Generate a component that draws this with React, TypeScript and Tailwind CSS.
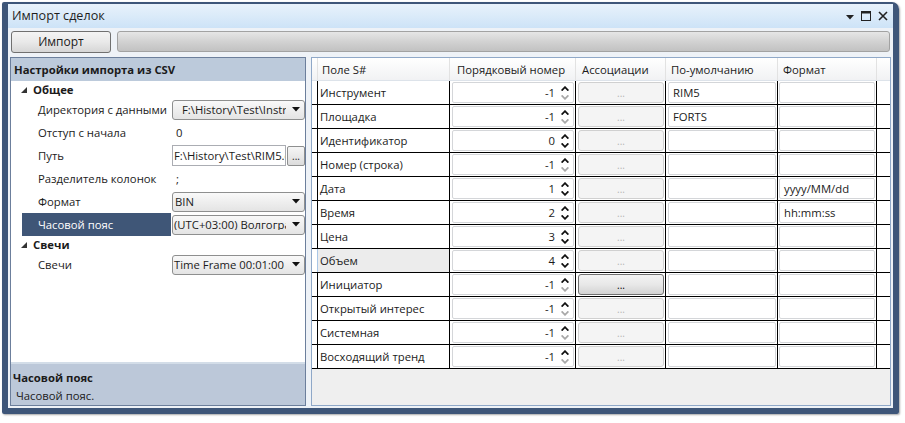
import React from "react";

type Row = {
  name: string;
  n: number;
  def?: string;
  fmt?: string;
  hover?: boolean;
  enabled?: boolean;
};

const rows: Row[] = [
  { name: "Инструмент", n: -1, def: "RIM5" },
  { name: "Площадка", n: -1, def: "FORTS" },
  { name: "Идентификатор", n: 0 },
  { name: "Номер (строка)", n: -1 },
  { name: "Дата", n: 1, fmt: "yyyy/MM/dd" },
  { name: "Время", n: 2, fmt: "hh:mm:ss" },
  { name: "Цена", n: 3 },
  { name: "Объем", n: 4, hover: true },
  { name: "Инициатор", n: -1, enabled: true },
  { name: "Открытый интерес", n: -1 },
  { name: "Системная", n: -1 },
  { name: "Восходящий тренд", n: -1 },
];

function DownTri() {
  return (
    <svg width="8" height="5" viewBox="0 0 8 5" className="shrink-0">
      <path d="M0 0 L8 0 L4 4.5 Z" fill="#111" />
    </svg>
  );
}

function Spinner({ downEnabled }: { downEnabled: boolean }) {
  return (
    <div className="flex flex-col items-center justify-center gap-[4px] w-[10px]">
      <svg width="8" height="5" viewBox="0 0 8 5">
        <path d="M0.6 4.6 L4 1.2 L7.4 4.6" stroke="#111" strokeWidth="1.8" fill="none" />
      </svg>
      <svg width="8" height="5" viewBox="0 0 8 5">
        <path
          d="M0.6 0.4 L4 3.8 L7.4 0.4"
          stroke={downEnabled ? "#111" : "#a8a8a8"}
          strokeWidth="1.8"
          fill="none"
        />
      </svg>
    </div>
  );
}

function Combo({ text, pl }: { text: string; pl: string }) {
  return (
    <div className="h-[20px] w-[133px] rounded-[3px] border border-[#8e8f8f] bg-gradient-to-b from-[#f9f9f9] to-[#e4e4e4] flex items-center pr-[4px]">
      <div className={`flex-1 overflow-hidden whitespace-nowrap mr-[6px] ${pl}`}>{text}</div>
      <DownTri />
    </div>
  );
}

function PropRow({
  label,
  selected,
  children,
}: {
  label: string;
  selected?: boolean;
  children: React.ReactNode;
}) {
  return (
    <div className="flex h-[23px] items-center">
      <div
        className={`ml-[11px] w-[149px] h-full flex items-center pl-[16px] whitespace-nowrap ${
          selected ? "bg-[#3f5677] text-white" : ""
        }`}
      >
        {label}
      </div>
      <div className="flex-1 h-full flex items-center pl-[1px]">{children}</div>
    </div>
  );
}

function Category({ label }: { label: string }) {
  return (
    <div className="flex h-[17px] items-center">
      <svg width="6" height="6" viewBox="0 0 6 6" className="ml-[10px] mr-[6px]">
        <path d="M6 0 L6 6 L0 6 Z" fill="#333" />
      </svg>
      <span className="font-bold">{label}</span>
    </div>
  );
}

export default function App() {
  return (
    <div className="w-[905px] h-[423px] bg-white pt-[2px] pl-[2px] font-['Open_Sans','Noto_Sans',sans-serif] text-[11.3px] text-[#1b1b1b] leading-none">
      <div className="w-[897px] h-[412px] border-l-[6px] border-r-[6px] border-t-[2px] border-b-[6px] border-[#3e5679] rounded-tr-[7px] rounded-tl-[2px] rounded-b-[2px] shadow-[1px_1px_2px_rgba(0,0,0,0.35)] flex flex-col">
        {/* title bar */}
        <div className="h-[24px] bg-gradient-to-b from-[#e8f2fb] to-[#cde3f7] flex items-center pl-[4px] pr-[5px]">
          <span className="flex-1 text-[#1e1e1e] text-[12.6px]">Импорт сделок</span>
          <div className="flex items-center gap-[7px]">
            <svg width="8" height="5" viewBox="0 0 8 5" className="mt-[2px]">
              <path d="M0 0 L8 0 L4 4.5 Z" fill="#222" />
            </svg>
            <svg width="10" height="10" viewBox="0 0 10 10">
              <rect x="0.5" y="0.5" width="9" height="9" fill="none" stroke="#222" />
              <rect x="0" y="0" width="10" height="2.5" fill="#222" />
            </svg>
            <svg width="10" height="10" viewBox="0 0 10 10">
              <path d="M1 1 L9 9 M9 1 L1 9" stroke="#222" strokeWidth="1.6" />
            </svg>
          </div>
        </div>

        {/* body */}
        <div className="flex-1 bg-[#eef2f7] flex flex-col">
          {/* toolbar */}
          <div className="h-[29px] flex items-start pt-[3px] pl-[3px] pr-[3px] gap-[6px]">
            <div className="w-[100px] h-[22px] rounded-[3px] border border-[#707070] bg-gradient-to-b from-[#f4f4f4] via-[#e9e9e9] to-[#d6d6d6] flex items-center justify-center text-[12px]">
              Импорт
            </div>
            <div className="flex-1 h-[21px] rounded-[3px] border border-[#a2a2a2] bg-gradient-to-b from-[#e6e6e6] via-[#d2d2d2] to-[#c2c2c2]"></div>
          </div>

          {/* panels */}
          <div className="flex-1 flex gap-[5px] pl-[2px] pr-[2px] pb-[2px]">
            {/* left panel */}
            <div className="w-[296px] border border-[#6c7f9c] bg-white flex flex-col">
              <div className="h-[23px] bg-[#bccadb] flex items-center pl-[3px] font-bold">
                Настройки импорта из CSV
              </div>
              <div className="flex-1 flex flex-col">
                <Category label="Общее" />
                <PropRow label="Директория с данными">
                  <Combo text="F:\History\Test\Instruments" pl="pl-[9px]" />
                </PropRow>
                <PropRow label="Отступ с начала">
                  <span className="pl-[4px]">0</span>
                </PropRow>
                <PropRow label="Путь">
                  <div className="h-[21px] w-[114px] border border-[#abadb3] bg-white flex items-center overflow-hidden whitespace-nowrap pl-[1px]">
                    F:\History\Test\RIM5.csv
                  </div>
                  <div className="h-[20px] w-[18px] ml-[1px] rounded-[2px] border border-[#8e8f8f] bg-gradient-to-b from-[#f6f6f6] to-[#dcdcdc] flex items-end justify-center pb-[4px] text-[10px]">
                    ...
                  </div>
                </PropRow>
                <PropRow label="Разделитель колонок">
                  <span className="pl-[4px]">;</span>
                </PropRow>
                <PropRow label="Формат">
                  <Combo text="BIN" pl="pl-[2px]" />
                </PropRow>
                <PropRow label="Часовой пояс" selected>
                  <Combo text="(UTC+03:00) Волгоград, Москва, Санкт-Петербург" pl="pl-[1px]" />
                </PropRow>
                <Category label="Свечи" />
                <PropRow label="Свечи">
                  <Combo text="Time Frame 00:01:00" pl="pl-[1px]" />
                </PropRow>
              </div>
              <div className="h-[43px] border-t-[2px] border-[#d3dde8] bg-[#bcc8d9] flex flex-col pl-[2px] pt-[5px]">
                <div className="font-bold h-[18px] flex items-center">Часовой пояс</div>
                <div className="h-[18px] flex items-center pl-[3px]">Часовой пояс.</div>
              </div>
            </div>

            {/* right panel */}
            <div className="flex-1 border border-[#8fa8c8] bg-[#efefef] flex flex-col">
              {/* header */}
              <div className="h-[23px] flex bg-gradient-to-b from-white to-[#f1f2f4] border-b border-[#dde3ea]">
                <div className="w-[5px]"></div>
                <div className="w-[132px] border-l border-[#e2e2e2] flex items-center pl-[4px] pt-[2px]">Поле S#</div>
                <div className="w-[126px] border-l border-[#e2e2e2] flex items-center pl-[7px] pt-[2px]">Порядковый номер</div>
                <div className="w-[90px] border-l border-[#e2e2e2] flex items-center pl-[6px] pt-[2px]">Ассоциации</div>
                <div className="w-[112px] border-l border-[#e2e2e2] flex items-center pl-[5px] pt-[2px]">По-умолчанию</div>
                <div className="w-[99px] border-l border-[#e2e2e2] flex items-center pl-[5px] pt-[2px]">Формат</div>
                <div className="flex-1 border-l border-[#e2e2e2]"></div>
              </div>
              {rows.map((r) => (
                <div key={r.name} className="h-[24px] flex border-b border-black bg-white">
                  <div className="w-[5px] bg-white"></div>
                  <div
                    className={`w-[132px] border-l flex items-center pl-[2px] ${
                      r.hover ? "bg-[#ececec] border-[#a9c6e6]" : "border-black"
                    }`}
                  >
                    {r.name}
                  </div>
                  <div className="w-[126px] border-l border-black flex items-center pl-[2px] pr-[1px]">
                    <div className="flex-1 h-[21px] rounded-[2px] border border-[#d4d6d9] bg-white flex items-center justify-end pr-[3px] gap-[5px]">
                      <span>{r.n}</span>
                      <Spinner downEnabled={r.n > -1} />
                    </div>
                  </div>
                  <div className="w-[90px] border-l border-black flex items-center pl-[2px] pr-[1px]">
                    {r.enabled ? (
                      <div className="flex-1 h-[21px] rounded-[3px] border border-[#707070] bg-gradient-to-b from-[#f3f3f3] via-[#e8e8e8] to-[#d3d3d3] flex items-end justify-center pb-[4px] text-[10px] text-black">
                        ...
                      </div>
                    ) : (
                      <div className="flex-1 h-[21px] rounded-[3px] border border-[#d0d0d0] bg-[#f4f4f4] flex items-end justify-center pb-[4px] text-[10px] text-[#b5b5b5]">
                        ...
                      </div>
                    )}
                  </div>
                  <div className="w-[112px] border-l border-black flex items-center pl-[2px] pr-[1px]">
                    <div className="flex-1 h-[21px] rounded-[2px] border border-[#d4d6d9] bg-white flex items-center pl-[4px]">
                      {r.def ?? ""}
                    </div>
                  </div>
                  <div className="w-[99px] border-l border-black flex items-center pl-[1px] pr-[1px]">
                    <div className="flex-1 h-[21px] rounded-[2px] border border-[#d4d6d9] bg-white flex items-center pl-[4px]">
                      {r.fmt ?? ""}
                    </div>
                  </div>
                  <div className="flex-1 border-l border-black bg-white"></div>
                </div>
              ))}
              <div className="flex-1"></div>
            </div>
          </div>
        </div>
      </div>
    </div>
  );
}
